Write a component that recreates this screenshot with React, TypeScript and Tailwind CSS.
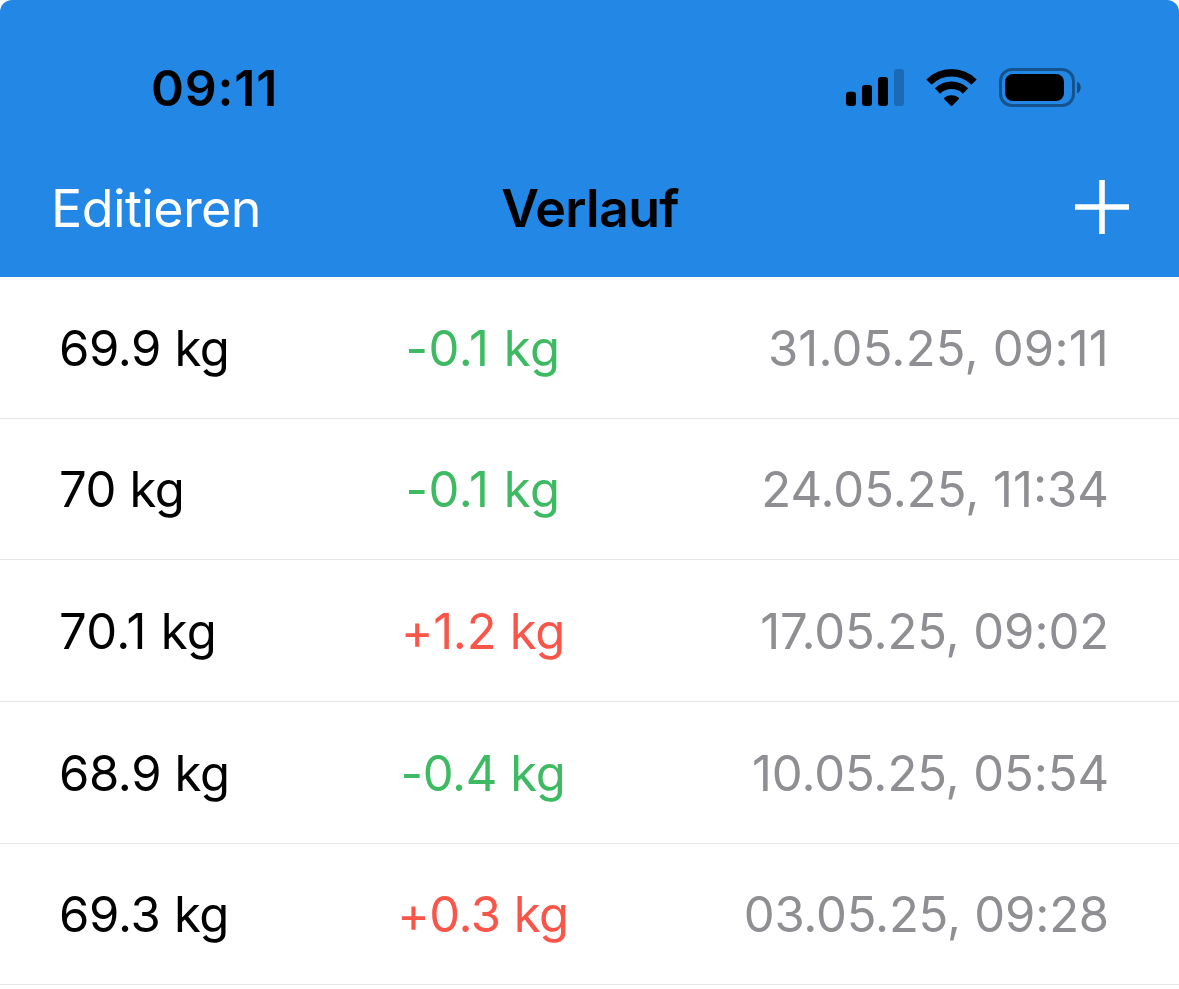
import React from 'react';

interface Entry {
  weight: string;
  weightClass: string;
  diff: string;
  diffClass: string;
  date: string;
  dateClass: string;
}

const ENTRIES: Entry[] = [
  { weight: '69.9 kg', weightClass: 'tracking-[-0.4px]', diff: '-0.1 kg', diffClass: 'text-[#3dba62] tracking-[0.5px]', date: '31.05.25, 09:11', dateClass: 'tracking-[0.2px]' },
  { weight: '70 kg', weightClass: 'tracking-[-0.4px]', diff: '-0.1 kg', diffClass: 'text-[#3dba62] tracking-[0.5px]', date: '24.05.25, 11:34', dateClass: '' },
  { weight: '70.1 kg', weightClass: 'tracking-[0.3px]', diff: '+1.2 kg', diffClass: 'text-[#fa5549] tracking-[-0.3px]', date: '17.05.25, 09:02', dateClass: 'tracking-[-0.1px]' },
  { weight: '68.9 kg', weightClass: 'tracking-[-0.4px]', diff: '-0.4 kg', diffClass: 'text-[#3dba62] tracking-[-0.4px]', date: '10.05.25, 05:54', dateClass: 'tracking-[-0.1px]' },
  { weight: '69.3 kg', weightClass: 'tracking-[-0.3px]', diff: '+0.3 kg', diffClass: 'text-[#fa5549] tracking-[-0.5px]', date: '03.05.25, 09:28', dateClass: 'tracking-[-0.2px]' },
];

const StatusIcons: React.FC = () => (
  <svg className="h-[40px] w-[240px]" viewBox="844 67 240 40">
    {/* signal */}
    <rect x="846" y="91.7" width="10" height="14.3" rx="3" />
    <rect x="862" y="85" width="10" height="21" rx="3" />
    <rect x="878" y="77" width="10" height="29" rx="3" />
    <rect x="894" y="69" width="10" height="37" rx="3" fill="#1b6ab5" />
    {/* wifi */}
    <g fill="none" stroke="#000" strokeWidth="7.5">
      <path d="M929 82.200a31.500 31.500 0 0 1 45 0" />
      <path d="M937.500 91a20 20 0 0 1 28 0" />
    </g>
    <path d="M944.300 99.300q-1-1 .2-1.900a12 12 0 0 1 14 0q1.200.9.200 1.900l-6.200 6.300q-1 .9-2 0z" />
    {/* battery */}
    <rect x="1000.5" y="69.5" width="73" height="36" rx="11.5" fill="none" stroke="#000" strokeWidth="3" opacity="0.38" />
    <rect x="1005" y="74" width="59" height="27" rx="8" />
    <path d="M1077 81.500c5 2 5 10 0 12z" opacity="0.45" />
  </svg>
);

const App: React.FC = () => {
  return (
    <div className="h-[989px] w-[1179px] overflow-hidden bg-white font-['Inter',sans-serif] text-black">
      <header className="flex h-[277px] flex-col rounded-t-[12px] bg-[#2387e5]">
        <div className="flex h-[138px] items-start justify-between pt-[67px] pr-[95px] pl-[151px]">
          <span className="pt-px text-[50px] leading-[40px] font-semibold tracking-[0.8px]">09:11</span>
          <StatusIcons />
        </div>
        <nav className="grid h-[139px] grid-cols-3 items-center pr-[50px] pl-[51px] text-[52px]">
          <button className="pt-[2px] text-left tracking-[-0.6px] text-white">Editieren</button>
          <h1 className="pt-[2px] text-center font-semibold tracking-[-0.7px]">Verlauf</h1>
          <svg className="mb-px h-[54px] w-[54px] justify-self-end" viewBox="0 0 54 54" stroke="#fff" strokeWidth="5.6">
            <path d="M0 27h54M27 0v54" />
          </svg>
        </nav>
      </header>
      <ul className="text-[49px]">
        {ENTRIES.map((entry) => (
          <li key={entry.date} className="grid h-[141.700px] grid-cols-[259px_330px_1fr] items-center border-b border-[#e6e6e8] pt-[2px] pr-[70px] pl-[59px]">
            <span className={entry.weightClass}>{entry.weight}</span>
            <span className={`text-center [font-feature-settings:'calt'_0] ${entry.diffClass}`}>{entry.diff}</span>
            <span className={`text-right text-[#8e8e93] ${entry.dateClass}`}>{entry.date}</span>
          </li>
        ))}
      </ul>
    </div>
  );
};

export default App;
